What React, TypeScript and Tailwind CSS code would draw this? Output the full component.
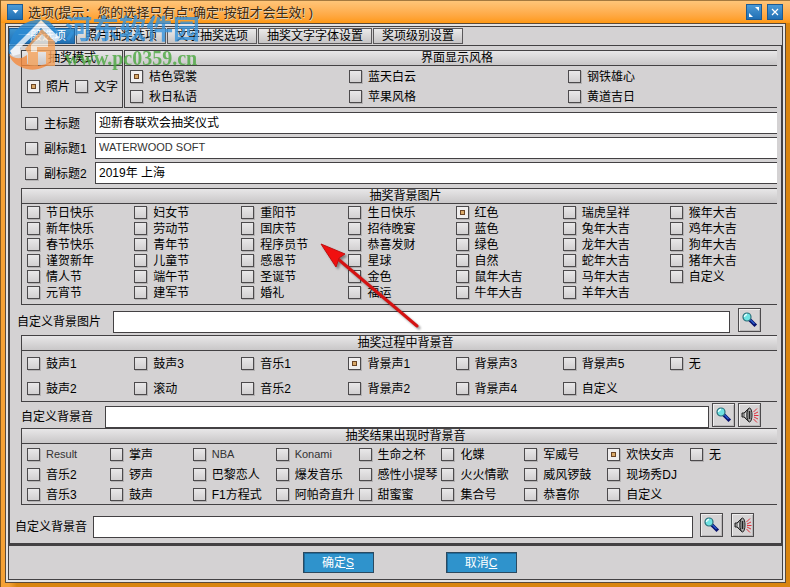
import type { ReactNode } from "react";
import clsx from "clsx";

const tabs = ["一般选项", "照片抽奖选项", "文字抽奖选项", "抽奖文字字体设置", "奖项级别设置"];

const styles = ["桔色霓裳", "秋日私语", "蓝天白云", "苹果风格", "钢铁雄心", "黄道吉日"];

const titles = [
  { label: "主标题", value: "迎新春联欢会抽奖仪式" },
  { label: "副标题1", value: "WATERWOOD SOFT" },
  { label: "副标题2", value: "2019年 上海" },
];

const backgrounds = [
  "节日快乐", "新年快乐", "春节快乐", "谨贺新年", "情人节", "元宵节",
  "妇女节", "劳动节", "青年节", "儿童节", "端午节", "建军节",
  "重阳节", "国庆节", "程序员节", "感恩节", "圣诞节", "婚礼",
  "生日快乐", "招待晚宴", "恭喜发财", "星球", "金色", "福运",
  "红色", "蓝色", "绿色", "自然", "鼠年大吉", "牛年大吉",
  "瑞虎呈祥", "兔年大吉", "龙年大吉", "蛇年大吉", "马年大吉", "羊年大吉",
  "猴年大吉", "鸡年大吉", "狗年大吉", "猪年大吉", "自定义",
];

const drawSounds = [
  "鼓声1", "鼓声2", "鼓声3", "滚动", "音乐1", "音乐2", "背景声1",
  "背景声2", "背景声3", "背景声4", "背景声5", "自定义", "无",
];

const resultSounds = [
  "Result", "音乐2", "音乐3", "掌声", "锣声", "鼓声", "NBA", "巴黎恋人", "F1方程式",
  "Konami", "爆发音乐", "阿帕奇直升", "生命之杯", "感性小提琴", "甜蜜蜜",
  "化蝶", "火火情歌", "集合号", "军威号", "威风锣鼓", "恭喜你",
  "欢快女声", "现场秀DJ", "自定义", "无",
];

const isLatin = (text: string) => /^[\x20-\x7e]+$/.test(text);

interface OptionProps {
  label: string;
  type?: "radio" | "checkbox";
  name?: string;
  checked?: boolean;
}

function Option({ label, type = "radio", name, checked }: OptionProps) {
  return (
    <label className="flex items-center gap-1.5 whitespace-nowrap">
      <input
        type={type}
        name={name}
        defaultChecked={checked}
        className="flex size-[13px] shrink-0 appearance-none items-center justify-center border border-[#4c4a4c] bg-linear-to-b from-[#e9e8e9] to-[#d2d0d1] shadow-[1px_1px_0_#b4b2b3] checked:bg-none checked:bg-[#f0eeee] checked:before:size-[5px] checked:before:border checked:before:border-[#6b4526] checked:before:bg-[#d9a968]"
      />
      <span className={clsx(isLatin(label) ? "text-[11px] text-[#333]" : "pt-px")}>{label}</span>
    </label>
  );
}

interface GroupProps {
  title: string;
  className?: string;
  titleClassName?: string;
  children: ReactNode;
}

function Group({ title, className, titleClassName, children }: GroupProps) {
  return (
    <fieldset className={clsx("min-w-0 border-y border-l border-[#434143]", className)}>
      <div
        className={clsx(
          "h-[15px] border-b border-[#434143] bg-linear-to-b from-[#e8e7e8] to-[#c9c7c8] text-center leading-[15px]",
          titleClassName,
        )}
      >
        {title}
      </div>
      {children}
    </fieldset>
  );
}

function IconButton({ label, children }: { label: string; children: ReactNode }) {
  return (
    <button
      type="button"
      aria-label={label}
      className="flex h-6 w-[23px] items-center justify-center border border-[#4c4a4c] bg-[#d6d4d5] shadow-[inset_1px_1px_0_#efeeee,inset_-1px_-1px_0_#bab8b9]"
    >
      {children}
    </button>
  );
}

function SearchButton() {
  return (
    <IconButton label="浏览">
      <svg width="19" height="20" viewBox="0 0 19 20">
        <path d="M10.500 10.500l4 4" stroke="#06106e" strokeWidth="3.6" strokeLinecap="square" />
        <path d="M10.500 10l4 4" stroke="#2c5fd0" strokeWidth="1.2" />
        <circle cx="7" cy="7" r="4" fill="#6fe3e3" stroke="#2b6f7a" strokeWidth="1.2" />
        <path d="M4.500 7A2.500 2.500 0 0 1 7 4.500" stroke="#e6ffff" strokeWidth="1.4" fill="none" />
      </svg>
    </IconButton>
  );
}

function PlayButton() {
  return (
    <IconButton label="试听">
      <svg width="20" height="18" viewBox="0 0 20 18" fill="none" className="shrink-0">
        <path d="M2 7h2L9 2v14L4 11H2z" fill="#8d8d8d" stroke="#222" />
        <path d="M5.500 7v4" stroke="#ddd" />
        <ellipse cx="9.500" cy="9" rx="2.500" ry="7" fill="#a8a8a8" stroke="#222" />
        <path d="M9.500 5v8" stroke="#222" strokeWidth="1.500" />
        <path
          d="M13.500 6L17 2.500M14 8L18 6M14 9.500H18.500M14 11L18 13M13.500 13L17 16.500"
          stroke="#e0303c"
        />
      </svg>
    </IconButton>
  );
}

interface PathRowProps {
  id: string;
  label: string;
  className: string;
  labelClassName: string;
  buttonsClassName: string;
  children: ReactNode;
}

function PathRow({ id, label, className, labelClassName, buttonsClassName, children }: PathRowProps) {
  return (
    <div className={clsx("flex items-end", className)}>
      <label htmlFor={id} className={clsx("shrink-0 pb-[3px]", labelClassName)}>
        {label}
      </label>
      <input id={id} className="h-[22px] min-w-0 flex-1 border border-[#434143] bg-white px-1 outline-none" />
      <div className={clsx("flex pb-px", buttonsClassName)}>{children}</div>
    </div>
  );
}

function TitleBar() {
  const button =
    "flex size-4 items-center justify-center border border-[#1d5b93] bg-linear-to-b from-[#4b9ad6] to-[#1f6fb4]";
  return (
    <header className="flex h-[23px] items-center border-t border-[#a5793f] bg-linear-to-b from-[#ffc578] to-[#ff990d] pr-[7px] pl-1.5">
      <button type="button" aria-label="系统菜单" className={button}>
        <svg width="7" height="4" viewBox="0 0 7 4">
          <path d="M0.500 0h6L3.500 3.500z" fill="#fff" />
        </svg>
      </button>
      <h1 className="ml-[5px] flex-1 pt-0.5 text-[13px] text-[#3b2a12] [text-shadow:1px_1px_0_#e3d3bb]">
        选项(提示：您的选择只有点"确定"按钮才会生效! )
      </h1>
      <div className="flex gap-[5px]">
        <button type="button" aria-label="最大化" className={button}>
          <svg width="12" height="12" viewBox="0 0 12 12" fill="#fff">
            <path d="M7 1h4v4zM1 7v4h4z" />
          </svg>
        </button>
        <button type="button" aria-label="关闭" className={button}>
          <svg width="8" height="8" viewBox="0 0 8 8" stroke="#fff" strokeWidth="1.2">
            <path d="M1 1l6 6M7 1L1 7" />
          </svg>
        </button>
      </div>
    </header>
  );
}

function Watermark() {
  return (
    <div className="pointer-events-none absolute top-[14px] left-[6px] flex opacity-80">
      <svg width="54" height="56" viewBox="0 0 54 56" className="shrink-0">
        <path d="M4 26C8 12 24 2 42 7L52 18L44 22L34 13L14 32L12 38L2 40C1 35 2 30 4 26z" fill="#2a8ad4" />
        <path d="M3 37L34 6L53 24L49 29L34 14L13 34V40L6 42z" fill="#f6faff" />
        <path d="M35 15L48 28V52H39V38H31V52H21V39L18 35z" fill="#f7a45c" />
        <path d="M24 31L35 20L41 26V33H30V38H24z" fill="#fdebd8" />
        <path d="M2 40C8 46 15 45 20 41V50C25 53 32 52 39 50L46 46C38 56 24 58 14 53C7 50 3 45 2 40z" fill="#f58a3c" />
      </svg>
      <div className="pl-1 whitespace-nowrap">
        <div className="text-[27px] leading-8 font-bold text-[#3593dc]">河东软件园</div>
        <div className="font-['Liberation_Serif',serif] text-[20px] leading-6 font-bold text-[#4aa83f]">
          www.pc0359.cn
        </div>
      </div>
    </div>
  );
}

function Pointer() {
  return (
    <svg
      width="106"
      height="94"
      viewBox="0 0 106 94"
      className="pointer-events-none absolute top-[240px] left-[317px] drop-shadow-[2px_2px_1px_#0006]"
    >
      <path d="M20 19L99 86" stroke="#d41212" strokeWidth="3" strokeLinecap="round" />
      <path d="M3 4L27 14L21 18L18 27z" fill="#f01010" stroke="#c01010" />
    </svg>
  );
}

function App() {
  return (
    <div className="relative flex min-h-screen flex-col overflow-hidden border-l border-[#84591f] bg-linear-to-r from-[#f5a135] from-1% to-[#d98510] to-2% pb-1 font-['Liberation_Sans','Noto_Sans_CJK_SC',sans-serif] text-[12px] leading-4 text-black">
      <TitleBar />
      <div className="mr-1 ml-1 flex flex-1 flex-col border border-[#5a4a3a] bg-[#e4e3e3] p-[2px]">
        <nav className="flex h-5 border border-[#434143] bg-[#d4d2d3]">
          <div className="flex gap-px py-px">
            {tabs.map((tab, i) => (
              <button
                key={tab}
                type="button"
                className={clsx(
                  "border px-2 leading-[15px] whitespace-nowrap",
                  i === 0
                    ? "border-[#1d5b93] bg-linear-to-b from-[#3b93cf] to-[#1f6fb4] text-white"
                    : "border-[#5a585a] bg-linear-to-b from-[#ebeaea] to-[#c6c4c5]",
                )}
              >
                {tab}
              </button>
            ))}
          </div>
        </nav>

        <main className="border-x-2 border-b-3 border-[#434143] bg-[#d4d2d3] pt-1">
          <div className="mr-1 ml-[11px] flex h-[58px] gap-px">
            <Group title="抽奖模式" className="w-[102px] shrink-0 border-r">
              <div className="flex h-[41px] items-center gap-[5px] pl-[5px]">
                <Option label="照片" name="mode" checked />
                <Option label="文字" name="mode" />
              </div>
            </Group>
            <Group title="界面显示风格" className="flex-1" titleClassName="pl-3">
              <div className="grid grid-flow-col grid-cols-[219fr_219fr_209fr] grid-rows-[repeat(2,20px)] pl-[5px]">
                {styles.map((label, i) => (
                  <Option key={label} label={label} name="style" checked={i === 0} />
                ))}
              </div>
            </Group>
          </div>

          <div className="mt-1 mr-1 ml-[15px] flex flex-col gap-[3px]">
            {titles.map(({ label, value }) => (
              <div key={label} className="flex h-[22px] items-center">
                <div className="w-[70px] shrink-0">
                  <Option type="checkbox" label={label} />
                </div>
                <input
                  aria-label={label}
                  defaultValue={value}
                  className={clsx(
                    "h-full min-w-0 flex-1 border-y border-l border-[#434143] bg-white px-[3px] pb-[3px] outline-none",
                    isLatin(value) && "text-[11px] text-[#333]",
                  )}
                />
              </div>
            ))}
          </div>

          <Group title="抽奖背景图片" className="mt-1 mr-1 ml-[11px]" titleClassName="pl-3">
            <div className="grid grid-flow-col grid-cols-7 grid-rows-[repeat(6,16px)] pb-1 pl-[5px]">
              {backgrounds.map((label) => (
                <Option key={label} label={label} name="background" checked={label === "红色"} />
              ))}
            </div>
          </Group>
          <PathRow
            id="background-path"
            label="自定义背景图片"
            className="h-[30px] pr-5 pb-[2px] pl-[7px]"
            labelClassName="w-24"
            buttonsClassName="pl-2"
          >
            <SearchButton />
          </PathRow>

          <Group title="抽奖过程中背景音" className="mr-1 ml-[11px]" titleClassName="pl-3">
            <div className="grid grid-flow-col grid-cols-7 grid-rows-[repeat(2,25px)] pl-[5px]">
              {drawSounds.map((label) => (
                <Option key={label} label={label} name="draw-sound" checked={label === "背景声1"} />
              ))}
            </div>
          </Group>
          <PathRow
            id="draw-sound-path"
            label="自定义背景音"
            className="h-[26px] pr-5 pl-[11px]"
            labelClassName="w-[84px]"
            buttonsClassName="gap-[3px] pl-[3px]"
          >
            <SearchButton />
            <PlayButton />
          </PathRow>

          <Group title="抽奖结果出现时背景音" className="mr-1 ml-[11px]" titleClassName="pl-3">
            <div className="grid grid-flow-col grid-cols-9 grid-rows-[repeat(3,20px)] pr-1 pl-[5px]">
              {resultSounds.map((label, i) => (
                <Option key={i} label={label} name="result-sound" checked={label === "欢快女声"} />
              ))}
            </div>
          </Group>
          <PathRow
            id="result-sound-path"
            label="自定义背景音"
            className="h-[38px] pr-[27px] pb-[5px] pl-[5px]"
            labelClassName="w-[78px]"
            buttonsClassName="gap-2 pl-[7px]"
          >
            <SearchButton />
            <PlayButton />
          </PathRow>
        </main>

        <footer className="flex flex-1 items-center justify-center gap-[72px] border-x border-b border-[#434143] bg-[#d4d2d3] pl-7">
          {[
            ["确定", "S"],
            ["取消", "C"],
          ].map(([text, key]) => (
            <button
              key={key}
              type="button"
              className="h-[21px] w-[71px] border border-[#2b4a60] bg-[#2f93cc] leading-[18px] text-white shadow-[inset_1px_1px_0_#1d6d9f]"
            >
              {text}
              <u>{key}</u>
            </button>
          ))}
        </footer>
      </div>
      <Pointer />
      <Watermark />
    </div>
  );
}

export default App;
